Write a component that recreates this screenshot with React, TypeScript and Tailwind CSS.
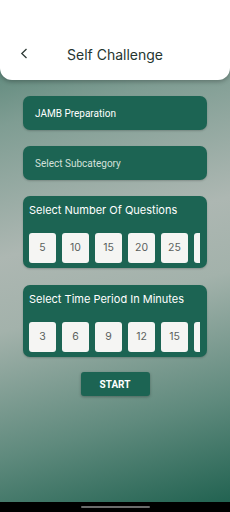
import React from 'react';

const questionCounts = [5, 10, 15, 20, 25];
const timePeriods = [3, 6, 9, 12, 15];

const OptionCard: React.FC<{ title: string; values: number[] }> = ({ title, values }) => (
    <div className="bg-[#1c6453] rounded-[7px] pt-[6px] pb-[5px] pl-[6px] pr-[7px] shadow-[0_1px_2px_rgba(0,0,0,0.2)]">
        <div className="text-[11px] leading-[16px] text-white">{title}</div>
        <div className="mt-[15px] flex gap-[6px] overflow-hidden">
            {values.map((v) => (
                <div
                    key={v}
                    className="w-[27px] h-[30px] shrink-0 rounded-[3px] bg-[#f5f5f3] flex items-center justify-center text-[10.5px] text-[#5b5f5d]"
                >
                    {v}
                </div>
            ))}
            {/* next option, scrolled out of view */}
            <div className="w-[27px] h-[30px] shrink-0 rounded-[3px] bg-[#f5f5f3]" />
        </div>
    </div>
);

const App: React.FC = () => {
    return (
        <div
            className="w-[230px] h-[512px] flex flex-col overflow-hidden bg-[linear-gradient(165deg,#3f7565_0%,#7f9d93_22%,#adb7b2_45%,#a3b2ab_58%,#5f8a7d_80%,#1c5f4d_100%)]"
            style={{ fontFamily: 'Inter, "Open Sans", sans-serif' }}
        >
            <div className="h-[80px] shrink-0 bg-white rounded-b-[12px] shadow-[0_2px_4px_rgba(0,0,0,0.25)] flex items-end pb-[15px] relative">
                <svg className="absolute left-[20px] top-[48px]" width="8" height="11" viewBox="0 0 8 11" fill="none">
                    <path d="M6.5 1L1.8 5.5L6.5 10" stroke="#2e3a36" strokeWidth="1.3" />
                </svg>
                <div className="w-full text-center text-[14px] leading-[20px] text-[#253530]">Self Challenge</div>
            </div>

            <div className="px-[23px] pt-[16px] flex flex-col">
                <div className="h-[34px] bg-[#1c6453] rounded-[7px] flex items-center pl-[12px] text-[10px] text-white shadow-[0_1px_2px_rgba(0,0,0,0.2)]" style={{ fontFamily: 'Roboto, sans-serif' }}>
                    JAMB Preparation
                </div>
                <div className="mt-[16px] h-[34px] bg-[#1c6453] rounded-[7px] flex items-center pl-[12px] text-[10px] text-[#d3e0da] shadow-[0_1px_2px_rgba(0,0,0,0.2)]" style={{ fontFamily: 'Roboto, sans-serif' }}>
                    Select Subcategory
                </div>
                <div className="mt-[16px]">
                    <OptionCard title="Select Number Of Questions" values={questionCounts} />
                </div>
                <div className="mt-[17px]">
                    <OptionCard title="Select Time Period In Minutes" values={timePeriods} />
                </div>
                <div className="mt-[15px] flex justify-center">
                    <button
                        className="w-[69px] h-[24px] bg-[#1c6453] rounded-[3px] text-white text-[10px] font-bold shadow-[0_1px_3px_rgba(0,0,0,0.3)]"
                        style={{ fontFamily: 'Roboto, sans-serif' }}
                    >
                        START
                    </button>
                </div>
            </div>

            <div className="mt-auto h-[10px] bg-black flex justify-center items-center">
                <div className="w-[69px] h-[2px] rounded-full bg-[#6b6b6b]" />
            </div>
        </div>
    );
};

export default App;
